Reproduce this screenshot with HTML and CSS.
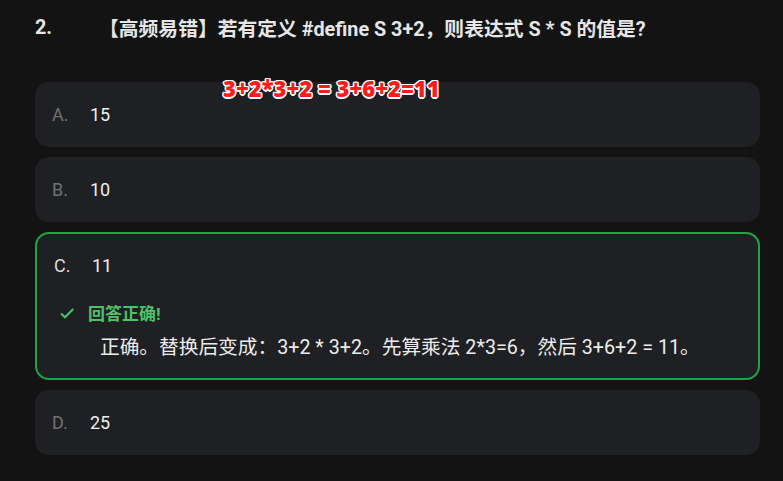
FILE: index.html
```html
<!DOCTYPE html>
<html lang="zh-CN">
<head>
<meta charset="utf-8">
<link rel="stylesheet" href="styles.css">
</head>
<body>
<div class="page">
  <div class="question">
    <span class="qnum">2.</span>
    <span class="qtext">【高频易错】若有定义 #define S 3+2，则表达式 S * S 的值是?</span>
  </div>
  <div class="options">
    <div class="annot">3+2*3+2 = 3+6+2=11</div>
    <div class="option">
      <div class="row"><span class="letter">A.</span><span class="val">15</span></div>
    </div>
    <div class="option">
      <div class="row"><span class="letter">B.</span><span class="val">10</span></div>
    </div>
    <div class="option correct">
      <div class="row"><span class="letter">C.</span><span class="val">11</span></div>
      <div class="feedback">
        <div class="fb-head">
          <svg class="check" width="16" height="16" viewBox="0 0 16 16"><path d="M2 8.5 L6 12.3 L14.2 4" fill="none" stroke="#4cc26a" stroke-width="2"/></svg>
          <span class="fb-title">回答正确!</span>
        </div>
        <div class="fb-text">正确。替换后变成：3+2 * 3+2。先算乘法 2*3=6，然后 3+6+2 = 11。</div>
      </div>
    </div>
    <div class="option">
      <div class="row"><span class="letter">D.</span><span class="val">25</span></div>
    </div>
  </div>
</div>
</body>
</html>
```
FILE: styles.css
```css
html, body {
  margin: 0;
  padding: 0;
  background: #131313;
}
body {
  width: 783px;
  height: 481px;
  overflow: hidden;
  font-family: Roboto, "Noto Sans CJK SC", sans-serif;
  color: #e8e8e8;
}
.page {
  padding: 14px 23px 0 35px;
}
.question {
  display: flex;
  align-items: center;
  height: 26px;
  font-size: 19.8px;
  font-weight: 700;
  color: #e6e6e6;
}
.qnum {
  width: 64px;
}
.options {
  position: relative;
  margin-top: 42px;
  display: flex;
  flex-direction: column;
  gap: 10px;
}
.annot {
  position: absolute;
  left: 188px;
  top: -7px;
  font-family: "Open Sans", "Noto Sans CJK SC", sans-serif;
  font-size: 22px;
  font-weight: 800;
  color: #ff1a1a;
  text-shadow: 1px 1px 0 #fff, -1px -1px 0 #fff, 1px -1px 0 #fff, -1px 1px 0 #fff, 0 1.5px 0 #fff, 1.5px 0 0 #fff, 0 -1.5px 0 #fff, -1.5px 0 0 #fff;
  line-height: 26px;
  z-index: 2;
}
.option {
  background: #1f2023;
  border-radius: 14px;
  height: 65px;
  box-sizing: border-box;
  padding: 0 17px;
  display: flex;
  flex-direction: column;
  justify-content: center;
}
.row {
  display: flex;
  align-items: center;
  font-size: 18px;
}
.letter {
  width: 38px;
  color: #6f7174;
}
.val {
  color: #eeeeee;
}
.option.correct {
  height: 148px;
  border: 2px solid #1fa347;
  justify-content: flex-start;
  padding: 21px 17px 0 17px;
}
.correct .letter {
  color: #dcdcdc;
}
.feedback {
  margin-top: 24px;
  padding-left: 5px;
}
.fb-head {
  display: flex;
  align-items: center;
  gap: 13px;
}
.check {
  display: block;
}
.fb-title {
  color: #4cc26a;
  font-size: 17px;
  font-weight: 700;
}
.fb-text {
  margin-top: 6px;
  padding-left: 41px;
  font-size: 19.7px;
  color: #ececec;
}
```
